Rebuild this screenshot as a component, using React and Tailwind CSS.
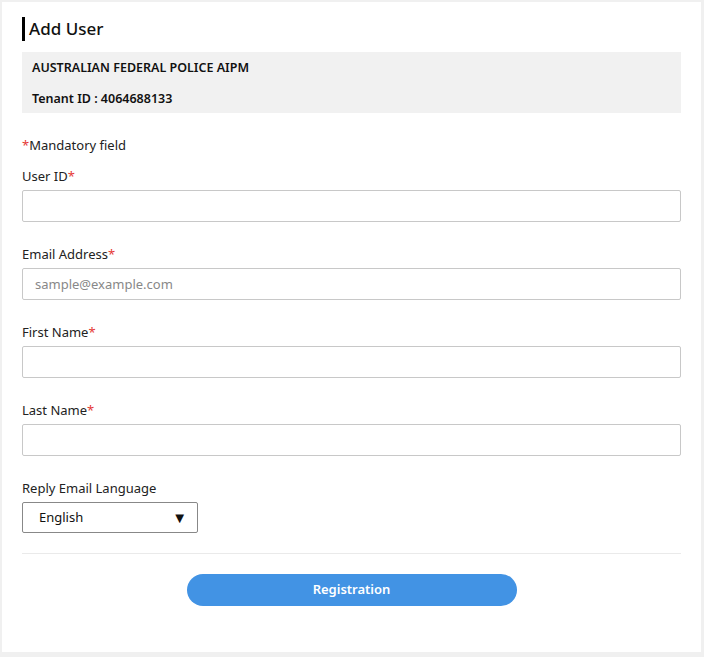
import React from 'react';

const Field = ({ label, placeholder }) => (
  <div className="mb-[23px]">
    <label className="block text-[13px] text-[#222] leading-[18px] mb-[5px]">
      {label}<span className="text-[#e53935]">*</span>
    </label>
    <input
      type="text"
      placeholder={placeholder}
      className="w-full h-[32px] border border-[#c8c8c8] rounded-[2px] px-3 text-[13px] placeholder-[#888] outline-none"
    />
  </div>
);

export default function App() {
  return (
    <div className="min-h-[657px] bg-[#f0f0f0] pt-[2px] pl-[2px] pr-[3px] pb-[5px]" style={{ fontFamily: '"Noto Sans", "Open Sans", sans-serif' }}>
      <div className="bg-white h-[650px] px-[20px] pt-[15px]">
        <h1 className="border-l-[3px] border-black pl-[4px] text-[17px] leading-[24px] font-medium text-[#111]">Add User</h1>
        <div className="bg-[#f1f1f1] mt-[11px] h-[61px] px-[10px] pt-[7px] text-[12.5px] font-semibold text-[#111] leading-[18px]">
          <div>AUSTRALIAN FEDERAL POLICE AIPM</div>
          <div className="mt-[13px]">Tenant ID : 4064688133</div>
        </div>
        <div className="mt-[23px] text-[13px] text-[#222] leading-[18px] mb-[13px]">
          <span className="text-[#e53935]">*</span>Mandatory field
        </div>
        <Field label="User ID" />
        <Field label="Email Address" placeholder="sample@example.com" />
        <Field label="First Name" />
        <Field label="Last Name" />
        <div>
          <label className="block text-[13px] text-[#222] leading-[18px] mb-[5px]">Reply Email Language</label>
          <div className="w-[176px] h-[31px] border border-[#888] rounded-[2px] flex items-center justify-between pl-[16px] pr-[10px] text-[13px] text-[#111]">
            <span>English</span>
            <span className="text-[15px]">▼</span>
          </div>
        </div>
        <div className="border-t border-[#eaeaea] mt-[20px] pt-[20px] flex justify-center">
          <button className="w-[330px] h-[32px] rounded-full bg-[#4293e4] text-white text-[13px] font-semibold">Registration</button>
        </div>
      </div>
    </div>
  );
}
